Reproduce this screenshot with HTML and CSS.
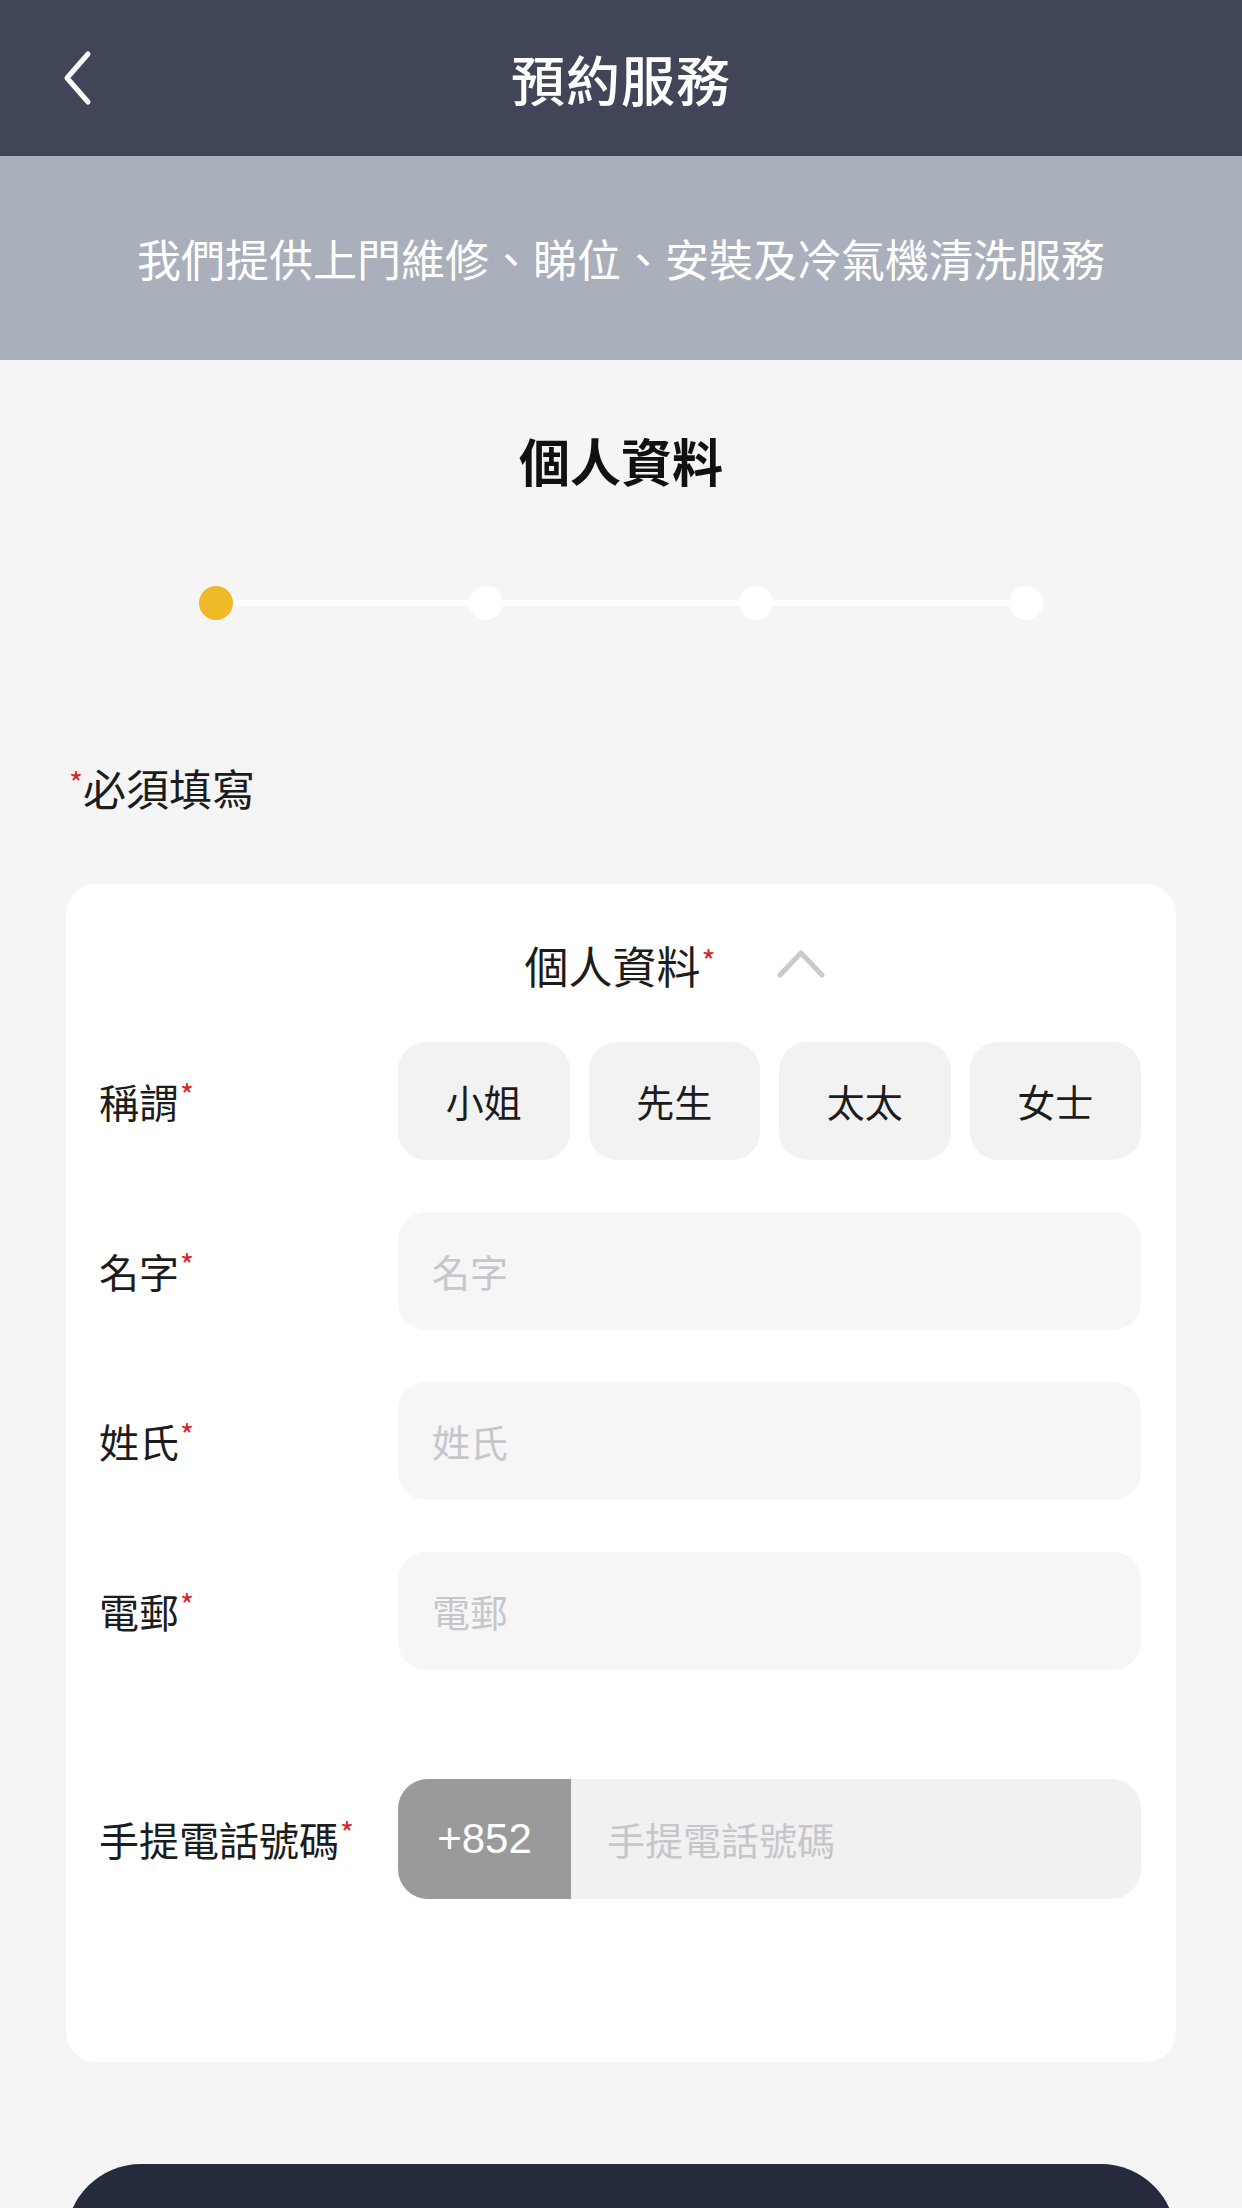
FILE: index.html
```html
<!DOCTYPE html>
<html lang="zh-Hant">
<head>
    <meta charset="UTF-8">
    <meta name="viewport" content="width=device-width, initial-scale=1.0">
    <title>預約服務</title>
    <link rel="stylesheet" href="styles.css">
</head>
<body>
    <!-- Top bar -->
    <header class="topbar">
        <a class="back" href="#">
            <svg width="34" height="56" viewBox="0 0 34 56">
                <path d="M27 4 L6 28 L27 52" fill="none" stroke="#fff" stroke-width="5" stroke-linecap="round" stroke-linejoin="round"/>
            </svg>
        </a>
        <h1>預約服務</h1>
        <span></span>
    </header>

    <div class="banner">我們提供上門維修、睇位、安裝及冷氣機清洗服務</div>

    <main class="page">
        <h2 class="step-title">個人資料</h2>

        <!-- Steps -->
        <div class="stepper">
            <span class="dot active"></span>
            <span class="track"></span>
            <span class="dot"></span>
            <span class="track"></span>
            <span class="dot"></span>
            <span class="track"></span>
            <span class="dot"></span>
        </div>

        <p class="required-note"><span class="req">*</span>必須填寫</p>

        <section class="card">
            <div class="card-head">
                <span></span>
                <h3>個人資料<span class="req">*</span></h3>
                <svg class="chevron" width="50" height="32" viewBox="0 0 50 32">
                    <path d="M4 28 L25 6 L46 28" fill="none" stroke="#cacaca" stroke-width="5" stroke-linecap="round" stroke-linejoin="round"/>
                </svg>
            </div>

            <div class="row">
                <label>稱謂<span class="req">*</span></label>
                <div class="titles">
                    <button class="title-btn">小姐</button>
                    <button class="title-btn">先生</button>
                    <button class="title-btn">太太</button>
                    <button class="title-btn">女士</button>
                </div>
            </div>

            <div class="row">
                <label>名字<span class="req">*</span></label>
                <input class="field" type="text" placeholder="名字">
            </div>

            <div class="row">
                <label>姓氏<span class="req">*</span></label>
                <input class="field" type="text" placeholder="姓氏">
            </div>

            <div class="row">
                <label>電郵<span class="req">*</span></label>
                <input class="field" type="email" placeholder="電郵">
            </div>

            <div class="row phone-row">
                <label>手提電話號碼<span class="req">*</span></label>
                <div class="phone">
                    <span class="prefix">+852</span>
                    <input class="phone-input" type="tel" placeholder="手提電話號碼">
                </div>
            </div>
        </section>

        <button class="next-btn"></button>
    </main>
</body>
</html>
```

FILE: styles.css
```css
/* General */
html, body {
    margin: 0;
    padding: 0;
    height: 2208px;
    overflow: hidden;
}
body {
    background-color: #f5f5f5;
    font-family: "Noto Sans CJK TC", "Noto Sans", sans-serif;
    color: #1c1c1c;
}
h1, h2, h3, p {
    margin: 0;
}
.req {
    color: #d8262c;
    font-size: 30px;
    vertical-align: 0.35em;
    margin-left: 1px;
}

/* Top bar */
.topbar {
    height: 156px;
    background-color: #414558;
    display: grid;
    grid-template-columns: 1fr auto 1fr;
    align-items: center;
}
.back {
    display: flex;
    align-items: center;
    padding-left: 61px;
}
.topbar h1 {
    color: #fff;
    font-size: 54px;
    font-weight: 500;
    letter-spacing: 1px;
}

.banner {
    height: 204px;
    background-color: #a9b0bb;
    color: #fff;
    font-size: 44px;
    display: flex;
    align-items: center;
    justify-content: center;
}

/* Page content */
.page {
    padding: 0 66px;
}
.step-title {
    text-align: center;
    font-size: 51px;
    font-weight: 700;
    line-height: 72px;
    padding-top: 64px;
    color: #111;
}

.stepper {
    display: flex;
    align-items: center;
    width: 845px;
    margin: 90px auto 0;
}
.dot {
    width: 34px;
    height: 34px;
    border-radius: 50%;
    background-color: #fff;
    flex: none;
}
.dot.active {
    background-color: #f0b928;
}
.track {
    flex: 1;
    height: 6px;
    background-color: #fff;
}

.required-note {
    font-size: 43px;
    line-height: 60px;
    margin-top: 132px;
    padding-left: 2px;
}

/* Card */
.card {
    margin-top: 67px;
    background-color: #fff;
    border-radius: 30px;
    padding: 0 35px 163px 33px;
}
.card-head {
    height: 158px;
    display: grid;
    grid-template-columns: 1fr auto 1fr;
    align-items: center;
}
.card-head h3 {
    font-size: 44px;
    font-weight: 400;
    line-height: 60px;
}
.chevron {
    margin-left: 60px;
}

.row {
    display: flex;
    align-items: center;
    margin-bottom: 52px;
}
.row:last-child {
    margin-bottom: 0;
}
.phone-row {
    margin-top: 109px;
}
.row label {
    width: 299px;
    flex: none;
    font-size: 40px;
}

.titles {
    flex: 1;
    display: grid;
    grid-template-columns: repeat(4, 1fr);
    gap: 19px;
}
.title-btn {
    height: 118px;
    border: none;
    border-radius: 28px;
    background-color: #f2f2f2;
    font-family: inherit;
    font-size: 38px;
    color: #1c1c1c;
}

.field {
    flex: 1;
    height: 118px;
    box-sizing: border-box;
    border: none;
    border-radius: 28px;
    background-color: #f6f6f6;
    padding: 0 34px;
    font-family: inherit;
    font-size: 38px;
    outline: none;
}
.field::placeholder,
.phone-input::placeholder {
    color: #c6c6cb;
}

.phone {
    flex: 1;
    height: 120px;
    display: flex;
    border-radius: 30px;
    overflow: hidden;
    background-color: #f1f1f1;
}
.prefix {
    width: 173px;
    background-color: #9a9a9a;
    color: #fff;
    font-family: "Liberation Sans", Arial, sans-serif;
    font-size: 42px;
    display: flex;
    align-items: center;
    justify-content: center;
}
.phone-input {
    flex: 1;
    border: none;
    background: transparent;
    padding: 0 36px;
    font-family: inherit;
    font-size: 38px;
    outline: none;
}

/* Bottom button */
.next-btn {
    display: block;
    width: 100%;
    height: 150px;
    margin-top: 102px;
    border: none;
    border-radius: 75px;
    background-color: #252a3d;
}
```
